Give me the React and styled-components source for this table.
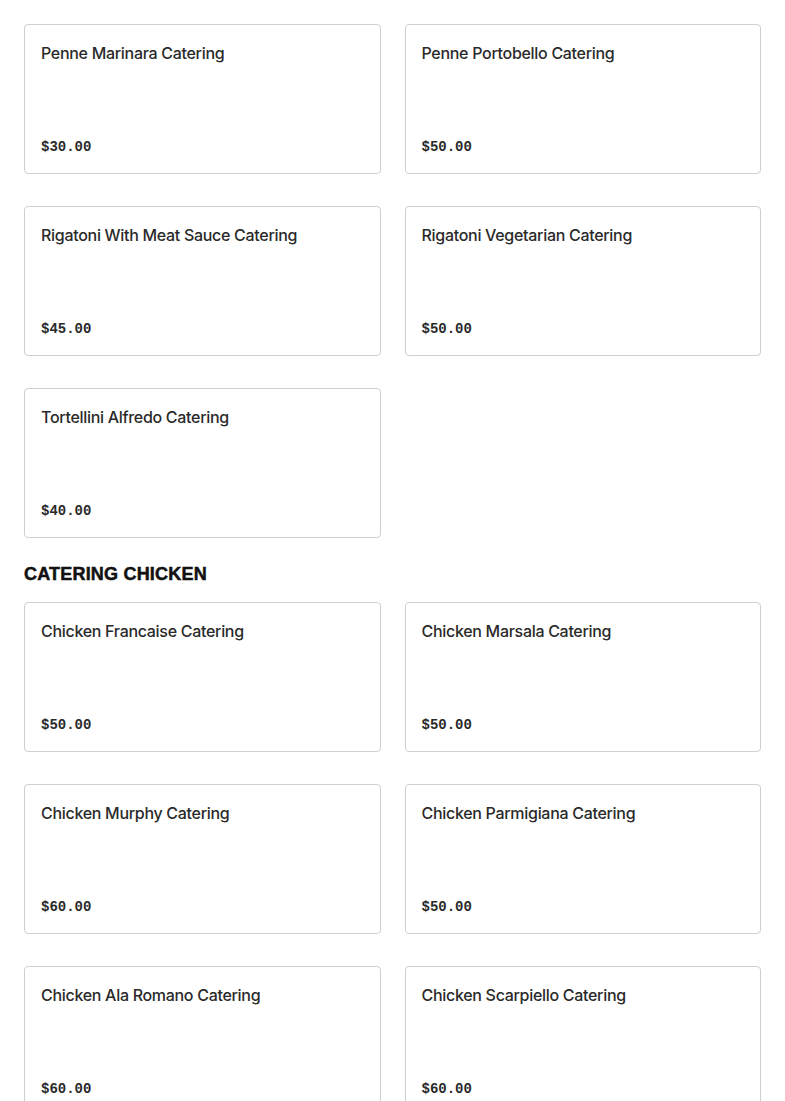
import React from "react";
import styled, { createGlobalStyle } from "styled-components";

const Global = createGlobalStyle`
  html, body { margin: 0; padding: 0; background: #fff; }
  body { font-family: Inter, "Liberation Sans", sans-serif; -webkit-font-smoothing: antialiased; }
`;

const Page = styled.div`
  padding: 24px;
  display: flex;
  flex-direction: column;
`;

const Grid = styled.div`
  display: grid;
  grid-template-columns: 1fr 1fr;
  column-gap: 24px;
  row-gap: 32px;
`;

const Heading = styled.h2`
  margin: 24px 0 16px;
  font-family: "Liberation Sans", Arial, sans-serif;
  font-weight: 700;
  font-size: 18px;
  line-height: 24px;
  letter-spacing: 0.2px;
  color: #111;
  text-transform: uppercase;
  -webkit-text-stroke: 0.5px #111;
`;

const Card = styled.div`
  box-sizing: border-box;
  height: 150px;
  border: 1px solid #cfcfcf;
  border-radius: 4px;
  padding: 16px 16px 15px;
  display: flex;
  flex-direction: column;
  justify-content: space-between;
  background: #fff;
`;

const Title = styled.div`
  font-family: Inter, "Liberation Sans", sans-serif;
  font-weight: 500;
  font-size: 16px;
  line-height: 24px;
  color: #2a2a2a;
  letter-spacing: -0.3px;
`;

const Price = styled.div`
  font-family: "Liberation Mono", "DejaVu Sans Mono", monospace;
  font-weight: 700;
  font-size: 14px;
  line-height: 22px;
  color: #2a2a2a;
`;

const pasta = [
  ["Penne Marinara Catering", "$30.00"],
  ["Penne Portobello Catering", "$50.00"],
  ["Rigatoni With Meat Sauce Catering", "$45.00"],
  ["Rigatoni Vegetarian Catering", "$50.00"],
  ["Tortellini Alfredo Catering", "$40.00"],
];

const chicken = [
  ["Chicken Francaise Catering", "$50.00"],
  ["Chicken Marsala Catering", "$50.00"],
  ["Chicken Murphy Catering", "$60.00"],
  ["Chicken Parmigiana Catering", "$50.00"],
  ["Chicken Ala Romano Catering", "$60.00"],
  ["Chicken Scarpiello Catering", "$60.00"],
];

const Item = ({ name, price }) => (
  <Card>
    <Title>{name}</Title>
    <Price>{price}</Price>
  </Card>
);

export default function App() {
  return (
    <>
      <Global />
      <Page>
        <Grid>
          {pasta.map(([n, p]) => (
            <Item key={n} name={n} price={p} />
          ))}
        </Grid>
        <Heading>Catering Chicken</Heading>
        <Grid>
          {chicken.map(([n, p]) => (
            <Item key={n} name={n} price={p} />
          ))}
        </Grid>
      </Page>
    </>
  );
}
